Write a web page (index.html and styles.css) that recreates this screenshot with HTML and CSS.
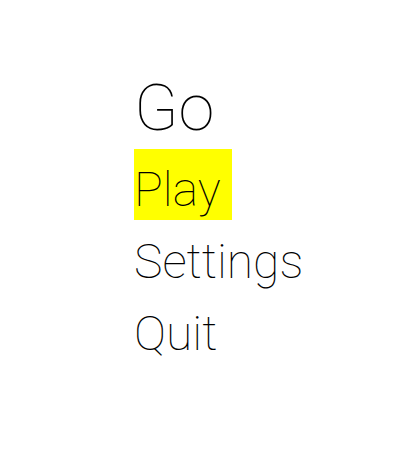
FILE: index.html
```html
<!DOCTYPE html>
<html>
<head>
<meta charset="utf-8">
<link rel="stylesheet" href="styles.css">
</head>
<body>
<div class="menu">
  <h1 class="title">Go</h1>
  <ul class="items">
    <li class="item selected">Play</li>
    <li class="item">Settings</li>
    <li class="item">Quit</li>
  </ul>
</div>
</body>
</html>
```

FILE: styles.css
```css
html, body {
  margin: 0;
  padding: 0;
  background: #fff;
}
.menu {
  padding: 68px 0 0 134px;
  font-family: Roboto, sans-serif;
  font-weight: 100;
  color: #000;
}
.title {
  margin: 0 0 1px 0;
  font-size: 65px;
  line-height: 80px;
  font-weight: 100;
}
.items {
  list-style: none;
  margin: 0;
  padding: 0;
  display: flex;
  flex-direction: column;
  align-items: flex-start;
  gap: 1px;
}
.item {
  font-size: 48px;
  line-height: 61px;
  padding-top: 10px;
}
.selected {
  background: #ffff00;
  padding-right: 11px;
}
```
